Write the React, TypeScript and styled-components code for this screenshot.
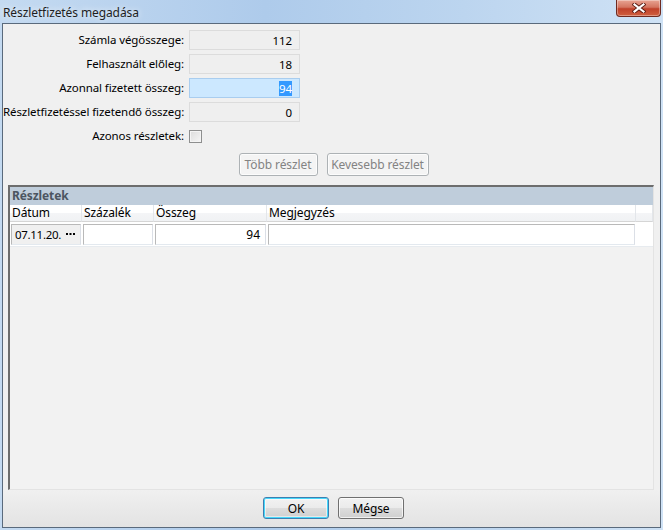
import React from "react";
import styled, { createGlobalStyle } from "styled-components";

const GlobalStyle = createGlobalStyle`
  html, body {
    margin: 0;
    padding: 0;
    background: #b9d1ea;
  }
  body {
    font-family: "Noto Sans", "Liberation Sans", sans-serif;
    font-size: 11.5px;
    letter-spacing: -0.1px;
    color: #000;
  }
`;

const Frame = styled.div`
  width: 663px;
  height: 530px;
  box-sizing: border-box;
  padding: 0 2px 2px 2px;
  display: flex;
  flex-direction: column;
  background: linear-gradient(90deg, #c4daf1 0%, #aecbeb 40%, #bcd5ef 70%, #cfe2f5 100%);
`;

const TitleBar = styled.div`
  height: 23px;
  display: flex;
  justify-content: space-between;
  align-items: flex-start;
  flex-shrink: 0;
`;

const Title = styled.div`
  padding: 4px 0 0 1px;
  font-size: 12px;
  color: #1e1e1e;
  text-shadow: 0 0 6px rgba(255, 255, 255, 0.9);
`;

const CloseButton = styled.div`
  width: 45px;
  height: 17px;
  box-sizing: border-box;
  border: 1px solid #6e2a20;
  border-top: none;
  border-radius: 0 0 4px 4px;
  background: linear-gradient(180deg, #e8a493 0%, #d47560 45%, #c0412a 55%, #d0603f 100%);
  box-shadow: inset 0 0 0 1px rgba(255, 255, 255, 0.35);
  display: flex;
  align-items: center;
  justify-content: center;
`;

const Client = styled.div`
  flex: 1;
  display: flex;
  flex-direction: column;
  background: #f0f0f0;
  border: 1px solid #5a6a7c;
  min-height: 0;
`;

const Form = styled.div`
  display: grid;
  grid-template-columns: 181px 111px;
  column-gap: 5px;
  row-gap: 4px;
  padding-top: 6px;
  align-items: center;
`;

const Label = styled.div`
  text-align: right;
  white-space: nowrap;
  line-height: 20px;
`;

const Field = styled.div<{ $active?: boolean }>`
  height: 20px;
  box-sizing: border-box;
  border: 1px solid ${(p) => (p.$active ? "#a9cdef" : "#dcdcdc")};
  background: ${(p) => (p.$active ? "#cce8ff" : "#efefef")};
  display: flex;
  align-items: center;
  justify-content: flex-end;
  padding-right: 7px;
`;

const Selected = styled.span`
  background: #3399ff;
  color: #fff;
  line-height: 15px;
`;

const CheckBox = styled.div`
  width: 13px;
  height: 13px;
  box-sizing: border-box;
  border: 1px solid #8e8f8f;
  background: linear-gradient(135deg, #dcdcdc 0%, #f6f6f6 100%);
  box-shadow: inset 0 0 0 1px #f4f4f4;
`;

const ButtonRow = styled.div`
  display: flex;
  justify-content: center;
  gap: 9px;
  padding: 7px 0 0 4px;
`;

const Button = styled.div<{ $w: number; $disabled?: boolean; $default?: boolean }>`
  width: ${(p) => p.$w}px;
  height: ${(p) => (p.$disabled ? 23 : 22)}px;
  box-sizing: border-box;
  border-radius: 3px;
  border: 1px solid
    ${(p) => (p.$disabled ? "#adb2b5" : p.$default ? "#3c7fb1" : "#707070")};
  background: ${(p) =>
    p.$disabled
      ? "#f4f4f4"
      : "linear-gradient(180deg, #f2f2f2 0%, #ebebeb 49%, #dddddd 50%, #cfcfcf 100%)"};
  box-shadow: ${(p) =>
    p.$default
      ? "inset 0 0 0 1px #48d8fb, inset 0 0 0 2px rgba(255,255,255,0.5)"
      : "inset 0 0 0 1px rgba(255,255,255,0.7)"};
  color: ${(p) => (p.$disabled ? "#838383" : "#000")};
  font-size: 12px;
  display: flex;
  align-items: center;
  justify-content: center;
`;

const Panel = styled.div`
  margin: 9px 6px 0 5px;
  flex: 1;
  display: flex;
  flex-direction: column;
  border-style: solid;
  border-width: 2px 1px 1px 2px;
  border-color: #6d6d6d #e3e3e3 #e3e3e3 #6d6d6d;
  background: #f2f2f2;
`;

const PanelHeader = styled.div`
  height: 18px;
  line-height: 18px;
  background: #bfcddb;
  color: #4c5561;
  font-weight: bold;
  font-size: 12px;
  padding-left: 2px;
`;

const Grid = styled.div`
  display: grid;
  grid-template-columns: 72px 72px 113px 369px 1fr;
`;

const HeadCell = styled.div`
  height: 16px;
  line-height: 16px;
  padding-left: 2px;
  background: linear-gradient(180deg, #ffffff 0%, #ffffff 50%, #f4f5f7 51%, #f0f2f4 100%);
  border-right: 1px solid #e3e6ea;
  border-bottom: 1px solid #d5d5d5;
  white-space: nowrap;
  overflow: hidden;
  font-size: 12px;
`;

const RowCell = styled.div`
  background: #fff;
  padding: 2px 1px 1px 1px;
  height: 25px;
  box-sizing: border-box;
  border-bottom: 1px solid #e7ebef;
`;

const Cell = styled.div<{ $grey?: boolean; $right?: boolean }>`
  height: 21px;
  box-sizing: border-box;
  border: 1px solid #b9b9b9;
  border-bottom-color: #e3e9ef;
  border-right-color: #dbdfe6;
  background: ${(p) => (p.$grey ? "#f0f0f0" : "#fff")};
  display: flex;
  align-items: center;
  justify-content: ${(p) => (p.$right ? "flex-end" : "space-between")};
  padding: ${(p) => (p.$grey ? "0 5px 0 3px" : "0 5px 0 3px")};
  font-size: ${(p) => (p.$grey ? "11.5px" : "12px")};
  letter-spacing: ${(p) => (p.$grey ? "-0.3px" : "0")};
  white-space: nowrap;
`;

const Footer = styled.div`
  height: 37px;
  flex-shrink: 0;
  display: flex;
  justify-content: center;
  align-items: flex-start;
  gap: 9px;
  padding: 7px 0 0 4px;
  box-sizing: border-box;
  background: linear-gradient(180deg, #f0f0f0 0%, #e3e3e3 100%);
`;

const rows: { label: string; value: string; active?: boolean }[] = [
  { label: "Számla végösszege:", value: "112" },
  { label: "Felhasznált előleg:", value: "18" },
  { label: "Azonnal fizetett összeg:", value: "94", active: true },
  { label: "Részletfizetéssel fizetendő összeg:", value: "0" },
];

const Ellipsis = () => (
  <svg width="9" height="3" viewBox="0 0 9 3">
    <rect x="0" y="0" width="2" height="2" fill="#000" />
    <rect x="3.5" y="0" width="2" height="2" fill="#000" />
    <rect x="7" y="0" width="2" height="2" fill="#000" />
  </svg>
);

const App: React.FC = () => {
  return (
    <>
      <GlobalStyle />
      <Frame>
        <TitleBar>
          <Title>Részletfizetés megadása</Title>
          <CloseButton>
            <svg width="14" height="10" viewBox="0 0 14 10">
              <path
                d="M2.5 1.5 L11.5 8.5 M11.5 1.5 L2.5 8.5"
                stroke="#5a1b12"
                strokeWidth="4"
                strokeLinecap="square"
              />
              <path
                d="M2.5 1.5 L11.5 8.5 M11.5 1.5 L2.5 8.5"
                stroke="#ffffff"
                strokeWidth="2.2"
                strokeLinecap="square"
              />
            </svg>
          </CloseButton>
        </TitleBar>
        <Client>
          <Form>
            {rows.map((r) => (
              <React.Fragment key={r.label}>
                <Label>{r.label}</Label>
                <Field $active={r.active}>
                  {r.active ? <Selected>{r.value}</Selected> : r.value}
                </Field>
              </React.Fragment>
            ))}
            <Label>Azonos részletek:</Label>
            <CheckBox />
          </Form>
          <ButtonRow>
            <Button $w={79} $disabled>
              Több részlet
            </Button>
            <Button $w={102} $disabled>
              Kevesebb részlet
            </Button>
          </ButtonRow>
          <Panel>
            <PanelHeader>Részletek</PanelHeader>
            <Grid>
              <HeadCell>Dátum</HeadCell>
              <HeadCell>Százalék</HeadCell>
              <HeadCell>Összeg</HeadCell>
              <HeadCell>Megjegyzés</HeadCell>
              <HeadCell />
              <RowCell>
                <Cell $grey>
                  <span>07.11.20.</span>
                  <Ellipsis />
                </Cell>
              </RowCell>
              <RowCell>
                <Cell />
              </RowCell>
              <RowCell>
                <Cell $right>94</Cell>
              </RowCell>
              <RowCell>
                <Cell />
              </RowCell>
              <RowCell />
            </Grid>
          </Panel>
          <Footer>
            <Button $w={66} $default>
              OK
            </Button>
            <Button $w={66}>Mégse</Button>
          </Footer>
        </Client>
      </Frame>
    </>
  );
};

export default App;
